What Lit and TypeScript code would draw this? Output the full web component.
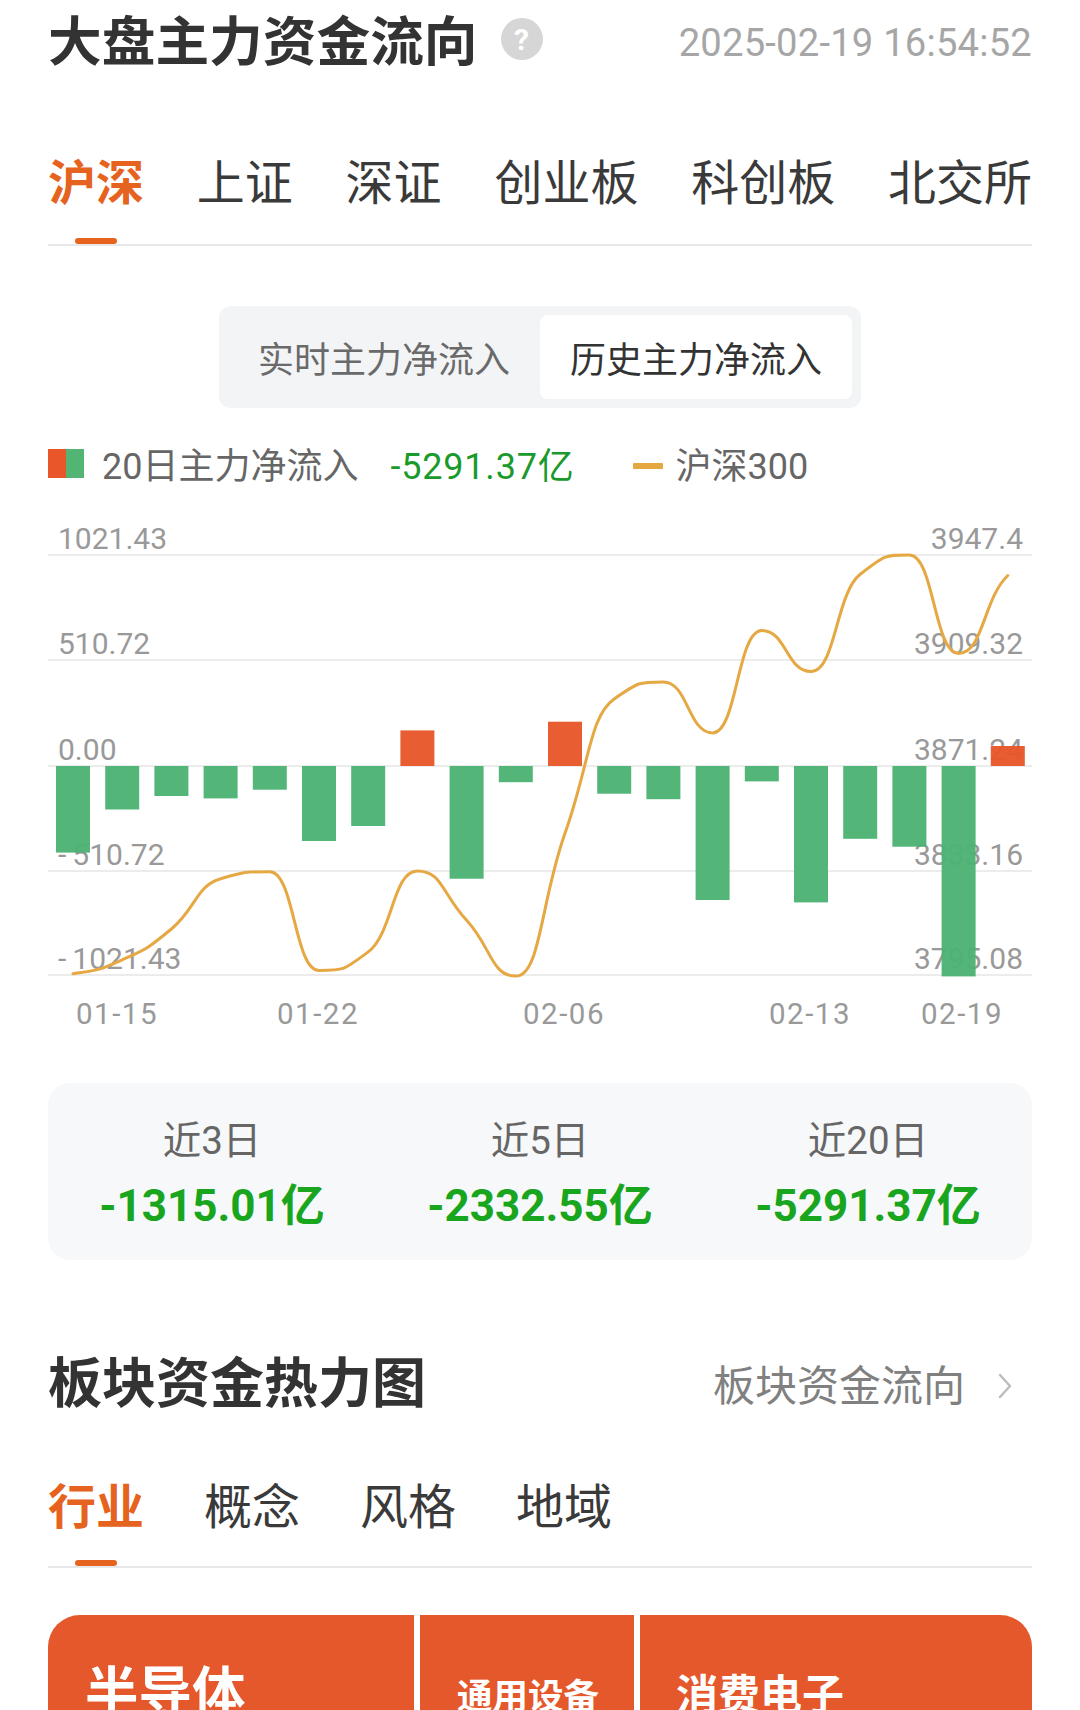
import { LitElement, html, css, svg } from "lit";
import { customElement } from "lit/decorators.js";

const X0 = 48;
const Y0 = 520;
const ZERO = 766;
const bars = [-86.6, -43.5, -30, -32.4, -23.7, -75, -60, 35.6, -112.7, -16.2, 44.3, -27.7, -33.2, -134, -15.4, -136.4, -72.8, -80.7, -210.4, 20];
// one close per bar, read from the reference at its zoom scale (y)
const closes = [1375, 1340, 1262, 1135, 1117, 1367, 1320, 1115, 1240, 1381, 1020, 680, 637, 766, 507, 611, 365, 316, 565, 368];
const pts: [number, number][] = closes.map((z, i) => [25 + 49.2 * i, 430 + z / 2.529 - Y0]);

function smooth(p: [number, number][]) {
  const n = p.length;
  const slope: number[] = p.map((q, i) => {
    if (i === 0) return (p[1][1] - q[1]) * 0.25;
    if (i === n - 1) return (q[1] - p[i - 1][1]) * 0.3;
    const a = p[i - 1][1], b = q[1], c = p[i + 1][1];
    if ((b - a) * (c - b) <= 0) return 0;
    let v = (c - a) * 0.25;
    const lim = Math.min(Math.abs(c - b), Math.abs(b - a));
    if (Math.abs(v) > lim) v = Math.sign(v) * lim;
    return v;
  });
  let d = `M${p[0][0].toFixed(1)} ${p[0][1].toFixed(1)}`;
  for (let i = 0; i < n - 1; i++) {
    const [x0, y0] = p[i], [x1, y1] = p[i + 1];
    const h = (x1 - x0) * 0.5;
    d += `C${(x0 + h).toFixed(1)} ${(y0 + slope[i]).toFixed(1)} ${(x1 - h).toFixed(1)} ${(y1 - slope[i + 1]).toFixed(1)} ${x1.toFixed(1)} ${y1.toFixed(1)}`;
  }
  return d;
}
const grid = [555, 660, 766, 871, 975];
const leftLabels = ["1021.43", "510.72", "0.00", "-510.72", "-1021.43"];
const rightLabels = ["3947.4", "3909.32", "3871.24", "3833.16", "3795.08"];
const dates: [string, number][] = [["01-15", 117], ["01-22", 318], ["02-06", 564], ["02-13", 810], ["02-19", 962]];

@customElement("app-root")
export class AppRoot extends LitElement {
  static styles = css`
    :host { display: block; width: 1080px; height: 1710px; overflow: hidden; background: #fff; font-family: Roboto, "Noto Sans CJK SC", sans-serif; color: #333; }
    .page { box-sizing: border-box; width: 1080px; height: 1710px; padding: 0 48px; overflow: hidden; }
    .head { display: flex; align-items: center; justify-content: space-between; height: 86px; }
    .head-left { display: flex; align-items: center; gap: 23px; }
    .title { font-size: 53.7px; font-weight: 700; line-height: 70px; color: #333; white-space: nowrap; }
    .help { width: 42px; height: 42px; border-radius: 50%; background: #d6d6d6; color: #fff; font-size: 30px; font-weight: 700; display: flex; align-items: center; justify-content: center; margin-top: -8px; }
    .date { font-size: 38.2px; letter-spacing: 0.2px; color: #a6a6a6; white-space: nowrap; }
    .tabs { display: flex; border-bottom: 2px solid #e8e8e8; }
    .tabs.main { justify-content: space-between; padding-top: 68px; }
    .tabs.sub { gap: 60px; padding-top: 58px; }
    .tab { display: flex; flex-direction: column; align-items: center; font-size: 48px; line-height: 60px; color: #3a3a3a; white-space: nowrap; }
    .tab.on { color: #e5631f; font-weight: 700; }
    .tab i { display: block; width: 42px; height: 6px; border-radius: 3px; background: transparent; }
    .tabs.main .tab i { margin-top: 24px; }
    .tabs.sub .tab i { margin-top: 22px; }
    .tab.on i { background: #e5631f; }
    .seg { box-sizing: border-box; width: 642px; height: 102px; margin: 60px auto 0; padding: 9px; display: grid; grid-template-columns: 1fr 1fr; background: #f3f4f6; border-radius: 12px; }
    .seg div { display: flex; align-items: center; justify-content: center; font-size: 36px; color: #6a6a6a; border-radius: 8px; }
    .seg .on { background: #fff; color: #333; }
    .legend { display: flex; align-items: center; height: 40px; margin-top: 35px; font-size: 36px; color: #666; white-space: nowrap; }
    .swatch { display: flex; width: 36px; height: 29px; margin-right: 18px; }
    .swatch b { flex: 1; background: #e8562a; }
    .swatch b + b { background: #52b574; }
    .val { color: #1b9a2c; margin-left: 32px; letter-spacing: 0.8px; }
    .dash { width: 30px; height: 6px; background: #e5a83f; margin: 6px 13px 0 58px; border-radius: 1px; }
    .chart { display: block; width: 984px; height: 520px; margin-top: 37px; }
    .chart text { font-family: Roboto, sans-serif; font-size: 30px; fill: #999; }
    .chart .date-label { font-size: 29.5px; letter-spacing: 1.5px; }
    .stats { display: grid; grid-template-columns: repeat(3, 1fr); height: 177px; margin-top: 43px; background: #f7f8fa; border-radius: 22px; text-align: center; }
    .stat { display: flex; flex-direction: column; align-items: center; padding-top: 34px; box-sizing: border-box; }
    .stat span { font-size: 38.5px; line-height: 48px; color: #666; }
    .stat strong { font-size: 44px; line-height: 54px; margin-top: 14px; color: #1aa51f; font-weight: 700; white-space: nowrap; }
    .sec { display: flex; align-items: center; justify-content: space-between; height: 70px; margin-top: 90px; }
    .sec h2 { margin: 0; font-size: 54px; font-weight: 700; line-height: 70px; color: #333; }
    .more { display: flex; align-items: center; gap: 33px; font-size: 42px; color: #808080; padding-right: 20px; margin-top: -6px; }
    .more svg { display: block; width: 14px; height: 26px; margin-top: 8px; }
    .heat { display: flex; gap: 6px; margin-top: 47px; height: 200px; border-radius: 32px 32px 0 0; overflow: hidden; }
    .cell { background: #e5582c; color: #fff; font-weight: 700; box-sizing: border-box; line-height: 1; white-space: nowrap; }
    .c1 { width: 366px; font-size: 53.5px; padding: 51px 0 0 37px; }
    .c2 { width: 214px; font-size: 35.5px; padding: 65px 0 0 37px; }
    .c3 { width: 392px; font-size: 42px; padding: 60px 0 0 36px; }
  `;

  private chart() {
    const y = (v: number) => v - Y0;
    return html`<svg class="chart" viewBox="0 0 984 520" aria-label="20日主力净流入">
      ${grid.map((g) => svg`<line x1="0" x2="984" y1=${y(g)} y2=${y(g)} stroke="#e6e6e6" stroke-width="1.5"></line>`)}
      ${leftLabels.map((t, i) => t.startsWith("-")
        ? svg`<text x="10" y=${y(grid[i]) - 6}>-<tspan dx="6">${t.slice(1)}</tspan></text>`
        : svg`<text x="10" y=${y(grid[i]) - 6}>${t}</text>`)}
      ${rightLabels.map((t, i) => svg`<text x="975" y=${y(grid[i]) - 6} text-anchor="end">${t}</text>`)}
      ${bars.map((v, i) => svg`<rect x=${8 + 49.2 * i} width="34" y=${v > 0 ? y(ZERO) - v : y(ZERO)} height=${Math.abs(v)} fill=${v > 0 ? "#e8562a" : "#4cb272"} fill-opacity="0.96"></rect>`)}
      <path d=${smooth(pts)} fill="none" stroke="#e5a843" stroke-width="3" stroke-linecap="round"></path>
      ${dates.map(([t, x]) => svg`<text class="date-label" x=${x - X0} y=${1024 - Y0} text-anchor="middle">${t}</text>`)}
    </svg>`;
  }

  render() {
    const main = ["沪深", "上证", "深证", "创业板", "科创板", "北交所"];
    const sub = ["行业", "概念", "风格", "地域"];
    const stats = [["近3日", "-1315.01亿"], ["近5日", "-2332.55亿"], ["近20日", "-5291.37亿"]];
    return html`<div class="page">
      <div class="head">
        <div class="head-left"><div class="title">大盘主力资金流向</div><div class="help">?</div></div>
        <div class="date">2025-02-19 16:54:52</div>
      </div>
      <div class="tabs main">${main.map((t, i) => html`<div class="tab ${i === 0 ? "on" : ""}">${t}<i></i></div>`)}</div>
      <div class="seg"><div>实时主力净流入</div><div class="on">历史主力净流入</div></div>
      <div class="legend">
        <div class="swatch"><b></b><b></b></div>
        <span>20日主力净流入</span><span class="val">-5291.37亿</span>
        <div class="dash"></div><span>沪深300</span>
      </div>
      ${this.chart()}
      <div class="stats">${stats.map(([a, b]) => html`<div class="stat"><span>${a}</span><strong>${b}</strong></div>`)}</div>
      <div class="sec">
        <h2>板块资金热力图</h2>
        <div class="more">板块资金流向<svg viewBox="0 0 14 26"><path d="M2 2l10 11L2 24" fill="none" stroke="#bdbdbd" stroke-width="2.5" stroke-linecap="round" stroke-linejoin="round"></path></svg></div>
      </div>
      <div class="tabs sub">${sub.map((t, i) => html`<div class="tab ${i === 0 ? "on" : ""}">${t}<i></i></div>`)}</div>
      <div class="heat">
        <div class="cell c1">半导体</div>
        <div class="cell c2">通用设备</div>
        <div class="cell c3">消费电子</div>
      </div>
    </div>`;
  }
}
